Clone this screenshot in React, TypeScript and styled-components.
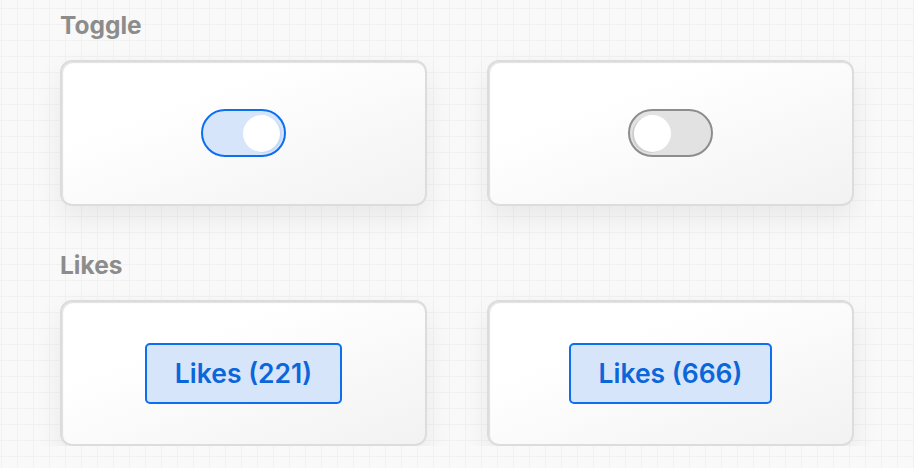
import styled, { createGlobalStyle } from "styled-components";
import { useState } from "react";

const GlobalStyle = createGlobalStyle`
  html, body {
    margin: 0;
    padding: 0;
  }
  body {
    font-family: Inter, "Liberation Sans", sans-serif;
    background-color: #f9f9f9;
    background-image:
      linear-gradient(to right, #f1f1f1 1px, transparent 1px),
      linear-gradient(to bottom, #f1f1f1 1px, transparent 1px);
    background-size: 16px 16px;
    background-position: 1px 8px;
  }
`;

export default function App() {
  const [on, setOn] = useState([true, false]);
  const likes = [221, 666];

  return (
    <>
      <GlobalStyle />
      <Page>
        <Section>
          <Heading>Toggle</Heading>
          <Row>
            {on.map((v, i) => (
              <Card key={i}>
                <Switch
                  $on={v}
                  role="switch"
                  aria-checked={v}
                  onClick={() => setOn(on.map((x, j) => (j === i ? !x : x)))}
                >
                  <Knob $on={v} />
                </Switch>
              </Card>
            ))}
          </Row>
        </Section>
        <Section>
          <Heading>Likes</Heading>
          <Row>
            {likes.map((n, i) => (
              <Card key={i}>
                <LikeButton>Likes ({n})</LikeButton>
              </Card>
            ))}
          </Row>
        </Section>
      </Page>
    </>
  );
}

const Page = styled.main`
  display: flex;
  flex-direction: column;
  gap: 45px;
  padding: 11px 60px 0;
`;

const Section = styled.section`
  display: flex;
  flex-direction: column;
  gap: 21px;
`;

const Heading = styled.h2`
  margin: 0;
  font-size: 24.5px;
  line-height: 28px;
  font-weight: 700;
  color: #8c8c8c;
`;

const Row = styled.div`
  display: flex;
  gap: 60px;
`;

const Card = styled.div`
  box-sizing: border-box;
  width: 367px;
  height: 146px;
  border-radius: 12px;
  border: 2px solid #dcdcdc;
  background: linear-gradient(160deg, #ffffff 30%, #f2f2f2 100%);
  box-shadow:
    inset 1px 1px 1px rgba(0, 0, 0, 0.12),
    0 12px 28px rgba(0, 0, 0, 0.07);
  display: flex;
  align-items: center;
  justify-content: center;
`;

const Switch = styled.button<{ $on: boolean }>`
  box-sizing: border-box;
  width: 85px;
  height: 48px;
  padding: 0 4px;
  border-radius: 24px;
  border: 2px solid ${(p) => (p.$on ? "#0b6ff0" : "#8d8d8d")};
  background: ${(p) => (p.$on ? "#d6e5fa" : "#e2e2e2")};
  display: flex;
  align-items: center;
  justify-content: ${(p) => (p.$on ? "flex-end" : "flex-start")};
  cursor: pointer;
`;

const Knob = styled.span<{ $on: boolean }>`
  width: 37px;
  height: 37px;
  border-radius: 50%;
  background: #fff;
  box-shadow: ${(p) =>
    p.$on ? "2px 1px 0 #c4d9f7" : "-2px 1px 0 #cfcfcf"};
`;

const LikeButton = styled.button`
  box-sizing: border-box;
  height: 61px;
  padding: 0 28px;
  border-radius: 5px;
  border: 2px solid #0b6ff0;
  background: #d6e5fa;
  color: #0b67d9;
  font-family: Inter, "Liberation Sans", sans-serif;
  font-size: 26.5px;
  font-weight: 600;
  cursor: pointer;
`;
